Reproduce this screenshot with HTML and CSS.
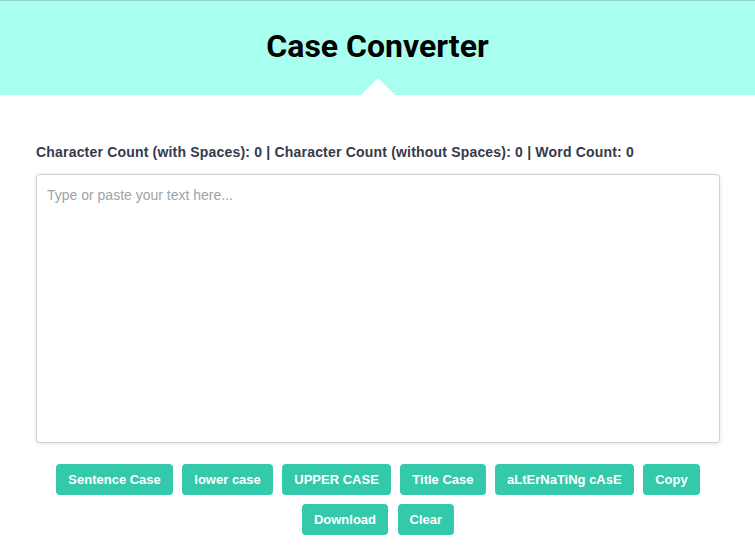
FILE: index.html
```html
<!DOCTYPE html>
<html lang="en">
<head>
<meta charset="utf-8">
<title>Case Converter</title>
<link rel="stylesheet" href="styles.css">
</head>
<body>
<header class="hero">
  <h1 class="hero-title">Case Converter</h1>
  <span class="hero-notch"></span>
</header>
<main class="content">
  <p class="stats">Character Count (with Spaces): <span>0</span> | Character Count (without Spaces): <span>0</span> | Word Count: <span>0</span></p>
  <textarea class="editor" placeholder="Type or paste your text here..."></textarea>
  <div class="actions">
    <button class="btn">Sentence Case</button>
    <button class="btn">lower case</button>
    <button class="btn">UPPER CASE</button>
    <button class="btn">Title Case</button>
    <button class="btn">aLtErNaTiNg cAsE</button>
    <button class="btn">Copy</button>
    <button class="btn">Download</button>
    <button class="btn">Clear</button>
  </div>
</main>
</body>
</html>
```
FILE: styles.css
```css
* { box-sizing: border-box; }
html, body { margin: 0; padding: 0; background: #fff; }
body { font-family: "Liberation Sans", Arial, sans-serif; }

.hero {
  position: relative;
  height: 95px;
  background: #a8fff0;
  border-top: 1px solid #8fd8c8;
  display: flex;
  align-items: center;
  justify-content: center;
  padding-bottom: 4px;
}
.hero-title {
  margin: 0;
  font-family: Roboto, "Liberation Sans", sans-serif;
  font-weight: 700;
  font-size: 32px;
  color: #000;
}
.hero-notch {
  position: absolute;
  left: 50%;
  bottom: 0;
  margin-left: -17px;
  width: 0;
  height: 0;
  border-left: 17px solid transparent;
  border-right: 17px solid transparent;
  border-bottom: 17px solid #fff;
}

.content {
  width: 684px;
  margin: 0 0 0 36px;
  padding-top: 49px;
}
.stats {
  margin: 0 0 14px;
  font-size: 14px;
  font-weight: 700;
  line-height: 16px;
  letter-spacing: 0.19px;
  color: #343a4b;
}
.editor {
  display: block;
  width: 684px;
  height: 269px;
  padding: 10px;
  border: 1px solid #d0d0d0;
  border-radius: 4px;
  box-shadow: 0 1px 4px rgba(0,0,0,0.12);
  font-family: "Liberation Sans", Arial, sans-serif;
  font-size: 14px;
  line-height: 20px;
  resize: none;
  outline: none;
}
.editor::placeholder { color: #9ea3a8; }

.actions {
  margin-top: 21px;
  display: flex;
  flex-wrap: wrap;
  justify-content: center;
  gap: 9px 9.5px;
}
.btn {
  background: #34c9ab;
  color: #fff;
  border: 0;
  border-radius: 4px;
  padding: 8px 12px;
  font-family: "Liberation Sans", Arial, sans-serif;
  font-size: 13px;
  font-weight: 700;
  line-height: 15px;
  cursor: pointer;
}
```
